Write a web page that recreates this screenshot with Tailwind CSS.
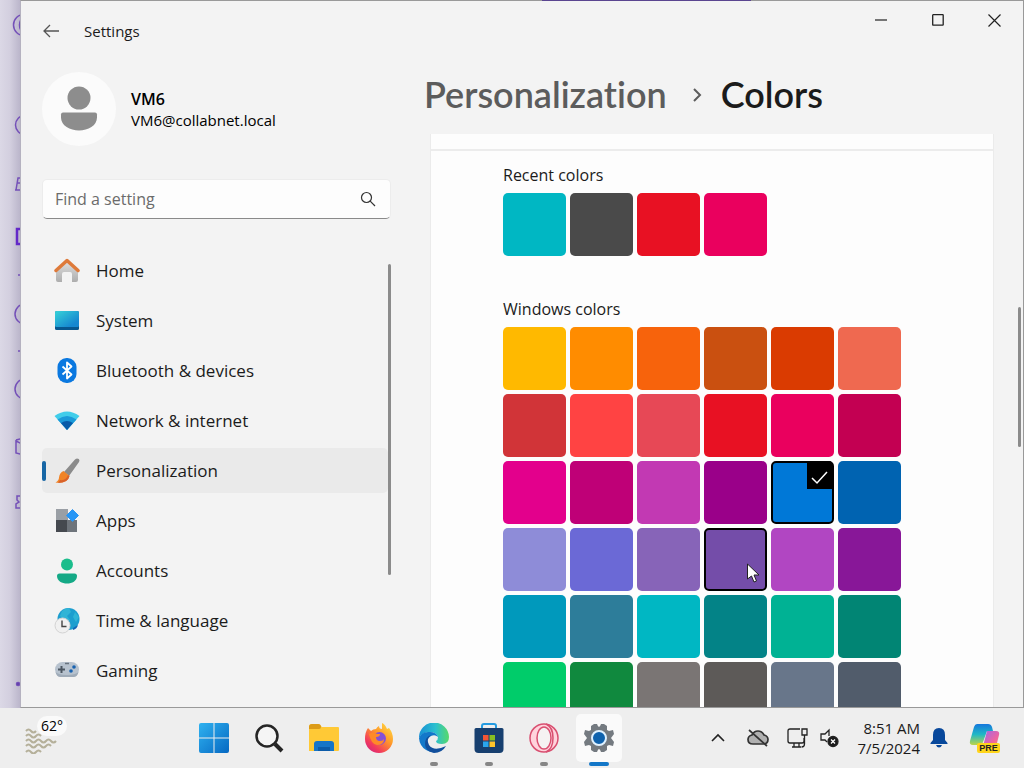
<!DOCTYPE html>
<html lang="en">
<head>
<meta charset="utf-8">
<title>Settings</title>
<script src="https://cdn.jsdelivr.net/npm/@tailwindcss/browser@4"></script>
</head>
<body class="flex h-screen flex-col overflow-hidden bg-[#eeeeee] font-['Open_Sans','Noto_Sans',sans-serif] text-[#1b1b1b]">
<div class="flex min-h-0 flex-1">
  <!-- sidebar of the browser behind the settings window -->
  <aside class="w-5 shrink-0 overflow-hidden bg-linear-to-r from-[#dbd8e6] via-[#d3cfdf] to-[#bbb6cb]">
    <svg width="20" height="708" fill="none" stroke="#7450b8" stroke-width="1.5">
      <circle cx="24" cy="25" r="10.500"/><ellipse cx="25" cy="25" rx="5.500" ry="8"/>
      <circle cx="25" cy="125" r="9.500"/>
      <path d="M16 190l2-12h8M15 190h10M17 183h6"/>
      <path d="M23 229h-6v15h6" stroke="#6328c8" stroke-width="2.500"/>
      <path d="M18 275h6M18 351h6"/>
      <circle cx="25" cy="314" r="10"/><circle cx="25" cy="389" r="10"/>
      <path d="M16 440l8-2M16 440v13l8 2M16 441l8 4"/>
      <path d="M22 496h-5v4l2 2-3 2v4h5"/>
      <circle cx="18" cy="684" r="1.500" fill="#50309a"/>
    </svg>
  </aside>

  <div class="relative flex min-w-0 flex-1 flex-col border-x border-t border-b border-[#999999] border-l-[#b5b2c0] bg-[#f3f3f3]">
    <span class="absolute -top-px left-[52%] h-px w-[209px] bg-[#5a4590]"></span>
    <header class="flex h-[60px] shrink-0 items-start justify-between">
      <div class="flex h-[60px] items-center gap-6 pl-[21px]">
        <button aria-label="Back" class="flex size-[18px] items-center justify-center">
          <svg width="18" height="18" viewBox="0 0 18 18" fill="none" stroke="#555" stroke-width="1.3"><path d="M17 9H2M8 3L2 9l6 6"/></svg>
        </button>
        <h1 class="text-[15px]">Settings</h1>
      </div>
      <div class="flex">
        <button aria-label="Minimize" class="flex h-[38px] w-[57px] items-center justify-center"><svg width="12" height="12" stroke="#222" stroke-width="1.2"><path d="M0 6h12"/></svg></button>
        <button aria-label="Maximize" class="flex h-[38px] w-[57px] items-center justify-center"><svg width="12" height="12" stroke="#222" fill="none" stroke-width="1.300"><rect x=".7" y=".7" width="10.500" height="10.500" rx=".5"/></svg></button>
        <button aria-label="Close" class="flex h-[38px] w-[57px] items-center justify-center"><svg width="13" height="13" stroke="#222" stroke-width="1.200"><path d="M.5.5l12 12M12.500.5l-12 12"/></svg></button>
      </div>
    </header>

    <div class="flex min-h-0 flex-1">
      <div class="flex w-[370px] shrink-0 flex-col pl-[21px]">
        <section class="flex items-center gap-[15px] pt-2.5">
          <svg class="shrink-0" width="74" height="76" viewBox="0 0 74 76"><circle cx="37" cy="38" r="37" fill="#fbfbfb"/><circle cx="37" cy="27" r="11.500" fill="#8d8d8d"/><path d="M19 43.500q0-2 2-2h32q2 0 2 2v3c0 8-9 13-18 13s-18-5-18-13z" fill="#8d8d8d"/></svg>
          <div>
            <p class="text-base leading-[22px] font-semibold text-black">VM6</p>
            <p class="text-[15px] leading-5 text-black">VM6@collabnet.local</p>
          </div>
        </section>
        <label class="mt-8 flex h-10 shrink-0 items-center rounded-[5px] border border-[#ececec] border-b-[#8a8a8a] bg-[#fdfdfd] pr-3.5 pl-3">
          <input type="search" aria-label="Find a setting" placeholder="Find a setting" class="min-w-0 flex-1 bg-transparent text-base outline-none placeholder:text-[#6b6b6b]">
          <svg width="16" height="16" fill="none" stroke="#333" stroke-width="1.200"><circle cx="6.500" cy="6.500" r="5"/><path d="M10.200 10.200L15 15"/></svg>
        </label>
        <div class="flex min-h-0 flex-1 overflow-hidden pt-[29px]">
          <nav class="flex min-w-0 flex-1 flex-col gap-[5px] text-[17px]">
            <a href="#" class="flex h-[45px] shrink-0 items-center gap-4 rounded-[5px] pl-3">
              <svg width="26" height="26" viewBox="0 0 26 26"><defs><linearGradient id="h" x2="0" y2="1"><stop stop-color="#e2e2e2"/><stop offset="1" stop-color="#adadad"/></linearGradient></defs><path d="M2 11L13 2l11 9v11q0 2-2 2h-4v-8q0-2-2-2h-6q-2 0-2 2v8H4q-2 0-2-2z" fill="url(#h)"/><path d="M2 12.500L13 2.500l11 10" fill="none" stroke="#de7a3a" stroke-width="3.500" stroke-linecap="round" stroke-linejoin="round"/></svg>Home</a>
            <a href="#" class="flex h-[45px] shrink-0 items-center gap-4 rounded-[5px] pl-3">
              <svg width="26" height="26" viewBox="0 0 26 26"><defs><linearGradient id="s" x2="1" y2="1"><stop stop-color="#36d3d8"/><stop offset=".8" stop-color="#1687d0"/></linearGradient></defs><rect x="1" y="3" width="24" height="19" rx="1.500" fill="#07578f"/><rect x="1" y="3" width="24" height="16" rx="1.500" fill="url(#s)"/></svg>System</a>
            <a href="#" class="flex h-[45px] shrink-0 items-center gap-4 rounded-[5px] pl-3">
              <svg width="26" height="26" viewBox="0 0 26 26"><rect x="3.500" width="19" height="25" rx="9" fill="#0a78e0"/><path d="M8.500 8.500l9 8-4.500 4V4.500l4.500 4-9 8" fill="none" stroke="#fff" stroke-width="1.800" stroke-linejoin="round"/></svg>Bluetooth &amp; devices</a>
            <a href="#" class="flex h-[45px] shrink-0 items-center gap-4 rounded-[5px] pl-3">
              <svg width="26" height="26" viewBox="0 0 26 26"><path d="M.5 8Q13-1 25.500 8L13 22z" fill="#41cdea"/><path d="M3.500 11.500Q13 4.500 22.500 11.500L13 22z" fill="#1b9ad9"/><path d="M7 15q6-4 12 0l-6 7z" fill="#075ba8"/></svg>Network &amp; internet</a>
            <a href="#" aria-current="page" class="flex h-[45px] shrink-0 items-center rounded-[5px] bg-[#eaeaea]">
              <span class="mr-2 h-5 w-1 rounded-full bg-[#1766a5]"></span>
              <svg class="mr-4" width="26" height="26" viewBox="0 0 26 26"><path d="M23 .5q3.500 0 2 3.500L15 18l-5-4L20.500 2q1-1.500 2.500-1.500z" fill="#8b8b8b"/><path d="M9.500 13l6 5q-2 8-14 6.500 3.500-2 3.500-5 .5-5 4.500-6.500z" fill="#f18426"/><path d="M6 22q6 1 8-5l1.500 1Q14 25 4 25z" fill="#d9622a"/></svg>Personalization</a>
            <a href="#" class="flex h-[45px] shrink-0 items-center gap-4 rounded-[5px] pl-3">
              <svg width="26" height="26" viewBox="0 0 26 26"><path d="M2 1h12v12H2z" fill="#9a9fa5"/><path d="M2 12h12v12H2z" fill="#45494f"/><path d="M13 12h10v12H13z" fill="#6e747b"/><path d="M18.500 1.500l6 6-6 6-6-6z" fill="#2896f5" stroke="#2896f5" stroke-linejoin="round"/></svg>Apps</a>
            <a href="#" class="flex h-[45px] shrink-0 items-center gap-4 rounded-[5px] pl-3">
              <svg width="26" height="26" viewBox="0 0 26 26"><circle cx="13" cy="6.500" r="6" fill="#1bbd8c"/><path d="M3 18q0-2.500 2.500-2.500h15q2.500 0 2.500 2.500c0 5-5 7.500-10 7.500S3 23 3 18z" fill="#14a986"/></svg>Accounts</a>
            <a href="#" class="flex h-[45px] shrink-0 items-center gap-4 rounded-[5px] pl-3">
              <svg width="26" height="26" viewBox="0 0 26 26"><circle cx="14.500" cy="11" r="11" fill="#1c9ecf"/><path d="M8 3q3-3 7-3l2 4-4 4 3 4-3 3-7-7zM21 4l4 5-3 5-3-5z" fill="#30b4d6"/><path d="M19 20l5-3q-1 4-5 5z" fill="#1264b5"/><circle cx="8.500" cy="17.500" r="7.500" fill="#f0f0f0" stroke="#d3d3d3"/><path d="M8 12.500v6h4.500" fill="none" stroke="#444" stroke-width="1.400"/></svg>Time &amp; language</a>
            <a href="#" class="flex h-[45px] shrink-0 items-center gap-4 rounded-[5px] pl-3">
              <svg width="26" height="26" viewBox="0 0 26 26"><rect x="1" y="4" width="24" height="15" rx="7.500" fill="#b7c2ce"/><path d="M1.500 14q1 5 5 5h13q4 0 5-5-3 3-11.500 3T1.500 14z" fill="#9fabb8"/><path d="M7.500 8v7M4 11.500h7" stroke="#4c5661" stroke-width="2"/><circle cx="20" cy="9" r="1.800" fill="#1762b0"/><circle cx="17" cy="13" r="1.800" fill="#1762b0"/><path d="M11 5.500h4" stroke="#68727d" stroke-width="1.500"/></svg>Gaming</a>
          </nav>
          <div class="mt-4 h-[311px] w-[3px] shrink-0 rounded-full bg-[#8b8b8b]"></div>
        </div>
      </div>

      <main class="flex min-w-0 flex-1 flex-col pl-[33px]">
        <h2 class="flex h-[73px] shrink-0 items-start pt-[11px] font-['Lato','Open_Sans',sans-serif] text-[36px] leading-[44px] font-semibold [font-variant-ligatures:none]">
          <a href="#" class="text-[#5c5c5c]">Personalization</a>
          <svg class="mt-[15px] mr-[18px] ml-6 shrink-0" width="12" height="16" fill="none" stroke="#5c5c5c" stroke-width="2"><path d="M3 2l6 6-6 6"/></svg>
          <span>Colors</span>
        </h2>
        <div class="flex min-h-0 flex-1">
          <div class="ml-1.5 min-w-0 flex-1 overflow-hidden border-x border-[#ebebeb] bg-[#fdfdfd]">
            <div class="h-[17px] border-b-2 border-[#ececec]"></div>
            <div class="pl-[72px] text-base">
              <fieldset>
                <legend class="pt-3 pb-1.5 leading-6">Recent colors</legend>
                <div class="grid grid-cols-[repeat(6,63px)] gap-1">
                  <input type="radio" name="recent" aria-label="Cool blue bright" class="h-[63px] w-full appearance-none rounded-[5px] bg-[#00b7c3]">
                  <input type="radio" name="recent" aria-label="Gray dark" class="h-[63px] w-full appearance-none rounded-[5px] bg-[#4a4a4a]">
                  <input type="radio" name="recent" aria-label="Red" class="h-[63px] w-full appearance-none rounded-[5px] bg-[#e81123]">
                  <input type="radio" name="recent" aria-label="Rose bright" class="h-[63px] w-full appearance-none rounded-[5px] bg-[#ea005e]">
                </div>
              </fieldset>
              <fieldset class="mt-[29px]">
                <legend class="pt-3 pb-1.5 leading-6">Windows colors</legend>
                <div class="grid grid-cols-[repeat(6,63px)] gap-1">
                  <input type="radio" name="accent" aria-label="Yellow gold" class="h-[63px] w-full appearance-none rounded-[5px] bg-[#ffb900]">
                  <input type="radio" name="accent" aria-label="Gold" class="h-[63px] w-full appearance-none rounded-[5px] bg-[#ff8c00]">
                  <input type="radio" name="accent" aria-label="Orange bright" class="h-[63px] w-full appearance-none rounded-[5px] bg-[#f7630c]">
                  <input type="radio" name="accent" aria-label="Orange dark" class="h-[63px] w-full appearance-none rounded-[5px] bg-[#ca5010]">
                  <input type="radio" name="accent" aria-label="Rust" class="h-[63px] w-full appearance-none rounded-[5px] bg-[#da3b01]">
                  <input type="radio" name="accent" aria-label="Pale rust" class="h-[63px] w-full appearance-none rounded-[5px] bg-[#ef6950]">
                  <input type="radio" name="accent" aria-label="Brick red" class="h-[63px] w-full appearance-none rounded-[5px] bg-[#d13438]">
                  <input type="radio" name="accent" aria-label="Mod red" class="h-[63px] w-full appearance-none rounded-[5px] bg-[#ff4343]">
                  <input type="radio" name="accent" aria-label="Pale red" class="h-[63px] w-full appearance-none rounded-[5px] bg-[#e74856]">
                  <input type="radio" name="accent" aria-label="Red" class="h-[63px] w-full appearance-none rounded-[5px] bg-[#e81123]">
                  <input type="radio" name="accent" aria-label="Rose bright" class="h-[63px] w-full appearance-none rounded-[5px] bg-[#ea005e]">
                  <input type="radio" name="accent" aria-label="Rose" class="h-[63px] w-full appearance-none rounded-[5px] bg-[#c30052]">
                  <input type="radio" name="accent" aria-label="Plum light" class="h-[63px] w-full appearance-none rounded-[5px] bg-[#e3008c]">
                  <input type="radio" name="accent" aria-label="Plum" class="h-[63px] w-full appearance-none rounded-[5px] bg-[#bf0077]">
                  <input type="radio" name="accent" aria-label="Orchid light" class="h-[63px] w-full appearance-none rounded-[5px] bg-[#c239b3]">
                  <input type="radio" name="accent" aria-label="Orchid" class="h-[63px] w-full appearance-none rounded-[5px] bg-[#9a0089]">
                  <label class="relative block h-[63px]">
                    <input type="radio" name="accent" checked aria-label="Default blue" class="block size-full appearance-none rounded-[5px] border-2 border-black bg-[#0078d7]">
                    <svg class="absolute top-0 right-0" width="28" height="28"><path d="M1 0h21q5 0 5 5v23H1z"/><path d="M6 17l5 5 10-11" fill="none" stroke="#fff" stroke-width="1.500"/></svg>
                  </label>
                  <input type="radio" name="accent" aria-label="Navy blue" class="h-[63px] w-full appearance-none rounded-[5px] bg-[#0063b1]">
                  <input type="radio" name="accent" aria-label="Purple shadow" class="h-[63px] w-full appearance-none rounded-[5px] bg-[#8e8cd8]">
                  <input type="radio" name="accent" aria-label="Purple shadow dark" class="h-[63px] w-full appearance-none rounded-[5px] bg-[#6b69d6]">
                  <input type="radio" name="accent" aria-label="Iris pastel" class="h-[63px] w-full appearance-none rounded-[5px] bg-[#8764b8]">
                  <label class="relative block h-[63px]">
                    <input type="radio" name="accent" aria-label="Iris spring" class="block size-full appearance-none rounded-[5px] border-2 border-black bg-[#744da9]">
                    <svg class="absolute right-[7px] bottom-2" width="14" height="20" viewBox="0 0 14 20"><path d="M1.500 1v15l4-3 2.500 6 2.500-1-2.500-6h5z" fill="#fff" stroke="#222"/></svg>
                  </label>
                  <input type="radio" name="accent" aria-label="Violet red light" class="h-[63px] w-full appearance-none rounded-[5px] bg-[#b146c2]">
                  <input type="radio" name="accent" aria-label="Violet red" class="h-[63px] w-full appearance-none rounded-[5px] bg-[#881798]">
                  <input type="radio" name="accent" aria-label="Cool blue bright" class="h-[63px] w-full appearance-none rounded-[5px] bg-[#0099bc]">
                  <input type="radio" name="accent" aria-label="Cool blue" class="h-[63px] w-full appearance-none rounded-[5px] bg-[#2d7d9a]">
                  <input type="radio" name="accent" aria-label="Seafoam" class="h-[63px] w-full appearance-none rounded-[5px] bg-[#00b7c3]">
                  <input type="radio" name="accent" aria-label="Seafoam teal" class="h-[63px] w-full appearance-none rounded-[5px] bg-[#038387]">
                  <input type="radio" name="accent" aria-label="Mint light" class="h-[63px] w-full appearance-none rounded-[5px] bg-[#00b294]">
                  <input type="radio" name="accent" aria-label="Mint dark" class="h-[63px] w-full appearance-none rounded-[5px] bg-[#018574]">
                  <input type="radio" name="accent" aria-label="Turf green" class="h-[63px] w-full appearance-none rounded-[5px] bg-[#00cc6a]">
                  <input type="radio" name="accent" aria-label="Sport green" class="h-[63px] w-full appearance-none rounded-[5px] bg-[#10893e]">
                  <input type="radio" name="accent" aria-label="Gray" class="h-[63px] w-full appearance-none rounded-[5px] bg-[#7a7574]">
                  <input type="radio" name="accent" aria-label="Gray brown" class="h-[63px] w-full appearance-none rounded-[5px] bg-[#5d5a58]">
                  <input type="radio" name="accent" aria-label="Steel blue" class="h-[63px] w-full appearance-none rounded-[5px] bg-[#68768a]">
                  <input type="radio" name="accent" aria-label="Metal blue" class="h-[63px] w-full appearance-none rounded-[5px] bg-[#515c6b]">
                </div>
              </fieldset>
            </div>
          </div>
          <div class="mt-[173px] mr-0.5 ml-6 h-[140px] w-[3px] shrink-0 rounded-full bg-[#8b8b8b]"></div>
        </div>
      </main>
    </div>
  </div>
</div>

<footer class="flex h-[60px] shrink-0 items-center justify-between bg-[#eeeeee]">
  <div class="flex items-center">
    <button class="flex h-12 w-[186px] items-start pl-[25px]" aria-label="Weather 62°">
      <svg class="mt-3 shrink-0" width="32" height="28" fill="none" stroke="#b5b09a" stroke-width="2"><path d="M1 5q2.500-3 5 0t5 0M1 10q2.500-3 5 0t5 0 5 0M1 15q2.500-3 5 0t5 0 5 0 5 0 5 0 5 0M1 20q2.500-3 5 0t5 0 5 0 5 0 5 0M1 26q2.500-3 5 0t5 0 5 0"/></svg>
      <span class="z-10 mt-0.5 -ml-5 rounded-full bg-[#fafafa] px-1 text-sm leading-5 text-black">62°</span>
    </button>
    <button aria-label="Start" class="flex h-12 w-[55px] items-center justify-center"><svg width="30" height="30" viewBox="0 0 30 30"><defs><linearGradient id="w" x2="1" y2="1"><stop stop-color="#2fb2f0"/><stop offset="1" stop-color="#0668c2"/></linearGradient></defs><path d="M2 0h12.500v14.500H0V2q0-2 2-2zM15.500 0H28q2 0 2 2v12.500H15.500zM0 15.500h14.500V30H2q-2 0-2-2zM15.500 15.500H30V28q0 2-2 2H15.500z" fill="url(#w)"/></svg></button>
    <button aria-label="Search" class="flex h-12 w-[55px] items-center justify-center"><svg width="30" height="30" viewBox="0 0 30 30" fill="none" stroke="#252525"><circle cx="13" cy="13" r="10.500" stroke-width="2.500" fill="#f5f5f5"/><path d="M21 21l7 7" stroke-width="4"/></svg></button>
    <button aria-label="File Explorer" class="flex h-12 w-[55px] items-center justify-center"><svg width="32" height="30" viewBox="0 0 32 30"><path d="M1 4q0-3 3-3h7l3 3h16q1 0 1 1v22q0 1-1 1H1z" fill="#ffc936"/><path d="M1 4q0-3 3-3h6q3 0 3 3 0 2-2 2H1z" fill="#dc9b18"/><path d="M6 28v-7q0-3 3-3h14q3 0 3 3v7z" fill="#1675c7"/><path d="M10 28v-4h12v4z" fill="#0c5ba8"/></svg></button>
    <button aria-label="Firefox" class="flex h-12 w-[55px] items-center justify-center"><svg width="30" height="30" viewBox="0 0 30 30"><defs><linearGradient id="f" x1="1" x2=".2" y2="1"><stop stop-color="#ffe846"/><stop offset=".45" stop-color="#ff9a2a"/><stop offset=".8" stop-color="#f23b5c"/><stop offset="1" stop-color="#d5267c"/></linearGradient></defs><path d="M4 5l3 3q2-2 5-2 1-2 3-3 0 3 3 3V0q3 1 5 6l2-1q4 5 4 11a14 14 0 0 1-28 0Q1 9 4 5z" fill="url(#f)"/><circle cx="15.500" cy="15.500" r="6.500" fill="#8450d6"/><path d="M5 11q4-3 8 0h3q0 3-4 3 0 4 4 4 3 0 4-2 0 6-7 6-6-1-8-11z" fill="#ff8a28"/></svg></button>
    <button aria-label="Microsoft Edge" class="relative flex h-12 w-[55px] items-center justify-center"><svg width="30" height="30" viewBox="0 0 30 30"><defs><linearGradient id="e" x2="1"><stop stop-color="#1790d5"/><stop offset=".55" stop-color="#2cc0cf"/><stop offset="1" stop-color="#58d969"/></linearGradient></defs><path d="M0 15A15 15 0 0 1 30 14q0 7-7 7-6 0-6-3 2-1 2-4-2-5-8-5Q3 9 0 15z" fill="url(#e)"/><path d="M0 15Q3 8 11 9q6 0 8 5-3-3-7-1-5 3-3 9 3 8 12 6A15 15 0 0 1 0 15z" fill="#1278ca"/><path d="M11 13q-4 3-1 9 5 7 17 1-4 7-12 7-9-2-9-9 0-7 6-9z" fill="#124f9c"/></svg><span class="absolute -bottom-1 h-1 w-2 rounded-full bg-[#868686]"></span></button>
    <button aria-label="Microsoft Store" class="relative flex h-12 w-[55px] items-center justify-center"><svg width="30" height="30" viewBox="0 0 30 30"><path d="M8 6V3q0-2 2-2h10q2 0 2 2v3" fill="none" stroke="#249be1" stroke-width="2"/><path d="M2 5h26q1.500 0 1.500 1.500V26q0 4-4 4h-21q-4 0-4-4V6.500Q.5 5 2 5z" fill="#173f6f"/><path d="M9 12h5.500v5.500H9z" fill="#f25535"/><path d="M15.500 12H21v5.500h-5.500z" fill="#86be22"/><path d="M9 18.500h5.500V24H9z" fill="#2ba5ec"/><path d="M15.500 18.500H21V24h-5.500z" fill="#ffc42b"/></svg><span class="absolute -bottom-1 h-1 w-2 rounded-full bg-[#868686]"></span></button>
    <button aria-label="Opera" class="relative flex h-12 w-[55px] items-center justify-center"><svg width="30" height="30" viewBox="0 0 30 30" fill="#ffd3dc" stroke="#d94f70" stroke-width="1.500"><circle cx="15" cy="15" r="14"/><path d="M17 1q7 3 7 14t-7 14" fill="none"/><ellipse cx="15" cy="15" rx="7" ry="11" fill="#f5f2f2"/></svg><span class="absolute -bottom-1 h-1 w-2 rounded-full bg-[#868686]"></span></button>
    <button aria-label="Settings" class="relative flex h-12 w-[55px] items-center justify-center"><span class="flex h-12 w-[46px] items-center justify-center rounded-[5px] bg-[#fafafa]"><svg width="32" height="30" viewBox="-16 -15 32 30"><path d="M-5-14h3q1 3 2 3t2-3h3l3 2v4l2 1 4-1 1 4-3 4 3 4-1 4-4-1-2 1v4l-3 2H2q-1-3-2-3t-2 3h-3l-3-2V8l-2-1-4 1-1-4 3-4-3-4 1-4 4 1 2-1v-4z" fill="#747a80"/><circle r="7" fill="#0f62ad" stroke="#dff1ff" stroke-width="2"/></svg></span><span class="absolute -bottom-1 h-1 w-5 rounded-full bg-[#1477c8]"></span></button>
  </div>
  <div class="flex items-center pr-6">
    <button aria-label="Show hidden icons" class="mr-[21px]"><svg class="block" width="16" height="16" fill="none" stroke="#222" stroke-width="1.600"><path d="M2 11l6-6 6 6"/></svg></button>
    <button aria-label="OneDrive" class="mr-[18px]"><svg class="block" width="22" height="20" fill="#b0b0b0" stroke="#333" stroke-width="1.700"><path d="M6 16q-5 0-5-4.500Q1 8 5 7q2-4 6-4t6 4q4 1 4 4.500 0 4.500-5 4.500z"/><path d="M2 2l18 16"/></svg></button>
    <button aria-label="Network" class="mr-[11px]"><svg class="block" width="22" height="22" fill="none" stroke="#222" stroke-width="1.300"><path d="M13 2H3q-2 0-2 2v10q0 2 2 2h12q2 0 2-2v-3M5 20h9M7 16v4M12 16v4M15 2h5v6h-5zM17.500 8v9q0 3-3 3"/></svg></button>
    <button aria-label="Sound muted" class="mr-[18px]"><svg class="block" width="20" height="20" fill="none" stroke="#222" stroke-width="1.300"><path d="M9 8V2L5 6H1v6h4l2 2"/><circle cx="13" cy="13.500" r="5" fill="#1b1b1b"/><path d="M11 11.500l4 4M15 11.500l-4 4" stroke="#fff"/></svg></button>
    <button class="mr-2.5 text-right text-[15px] leading-5"><time class="block">8:51 AM</time><time class="block">7/5/2024</time></button>
    <button aria-label="Notifications" class="mr-[21px]"><svg class="block" width="18" height="22" fill="#08489b"><path d="M9 1q6 0 6 7v5l2.500 3v1H.5v-1L3 13V8q0-7 6-7zM6 18h6q-1 2.500-3 2.500T6 18z"/></svg></button>
    <button aria-label="Copilot preview"><svg class="block" width="31" height="30" viewBox="0 0 31 30"><defs><linearGradient id="c" x2="0" y2="1"><stop stop-color="#1577dd"/><stop offset=".5" stop-color="#20b8c5"/><stop offset="1" stop-color="#bdd548"/></linearGradient><linearGradient id="d" x2="1" y2="1"><stop stop-color="#9a68ed"/><stop offset=".6" stop-color="#ee65a0"/><stop offset="1" stop-color="#f79a58"/></linearGradient></defs><path d="M8 1h11q3 0 4 3l1 4h-6l-4 11q-1 3-4 3H4q-4 0-3-4L5 4q1-3 3-3z" fill="url(#c)"/><path d="M18 8h9q4 0 3 4l-3 12q-1 3-4 3H13z" fill="url(#d)"/><rect x="8" y="20" width="23" height="10" rx="2" fill="#ffd51b"/><text x="19.500" y="28" text-anchor="middle" font-family="Liberation Sans" font-size="9" font-weight="700" fill="#222">PRE</text></svg></button>
  </div>
</footer>
</body>
</html>
